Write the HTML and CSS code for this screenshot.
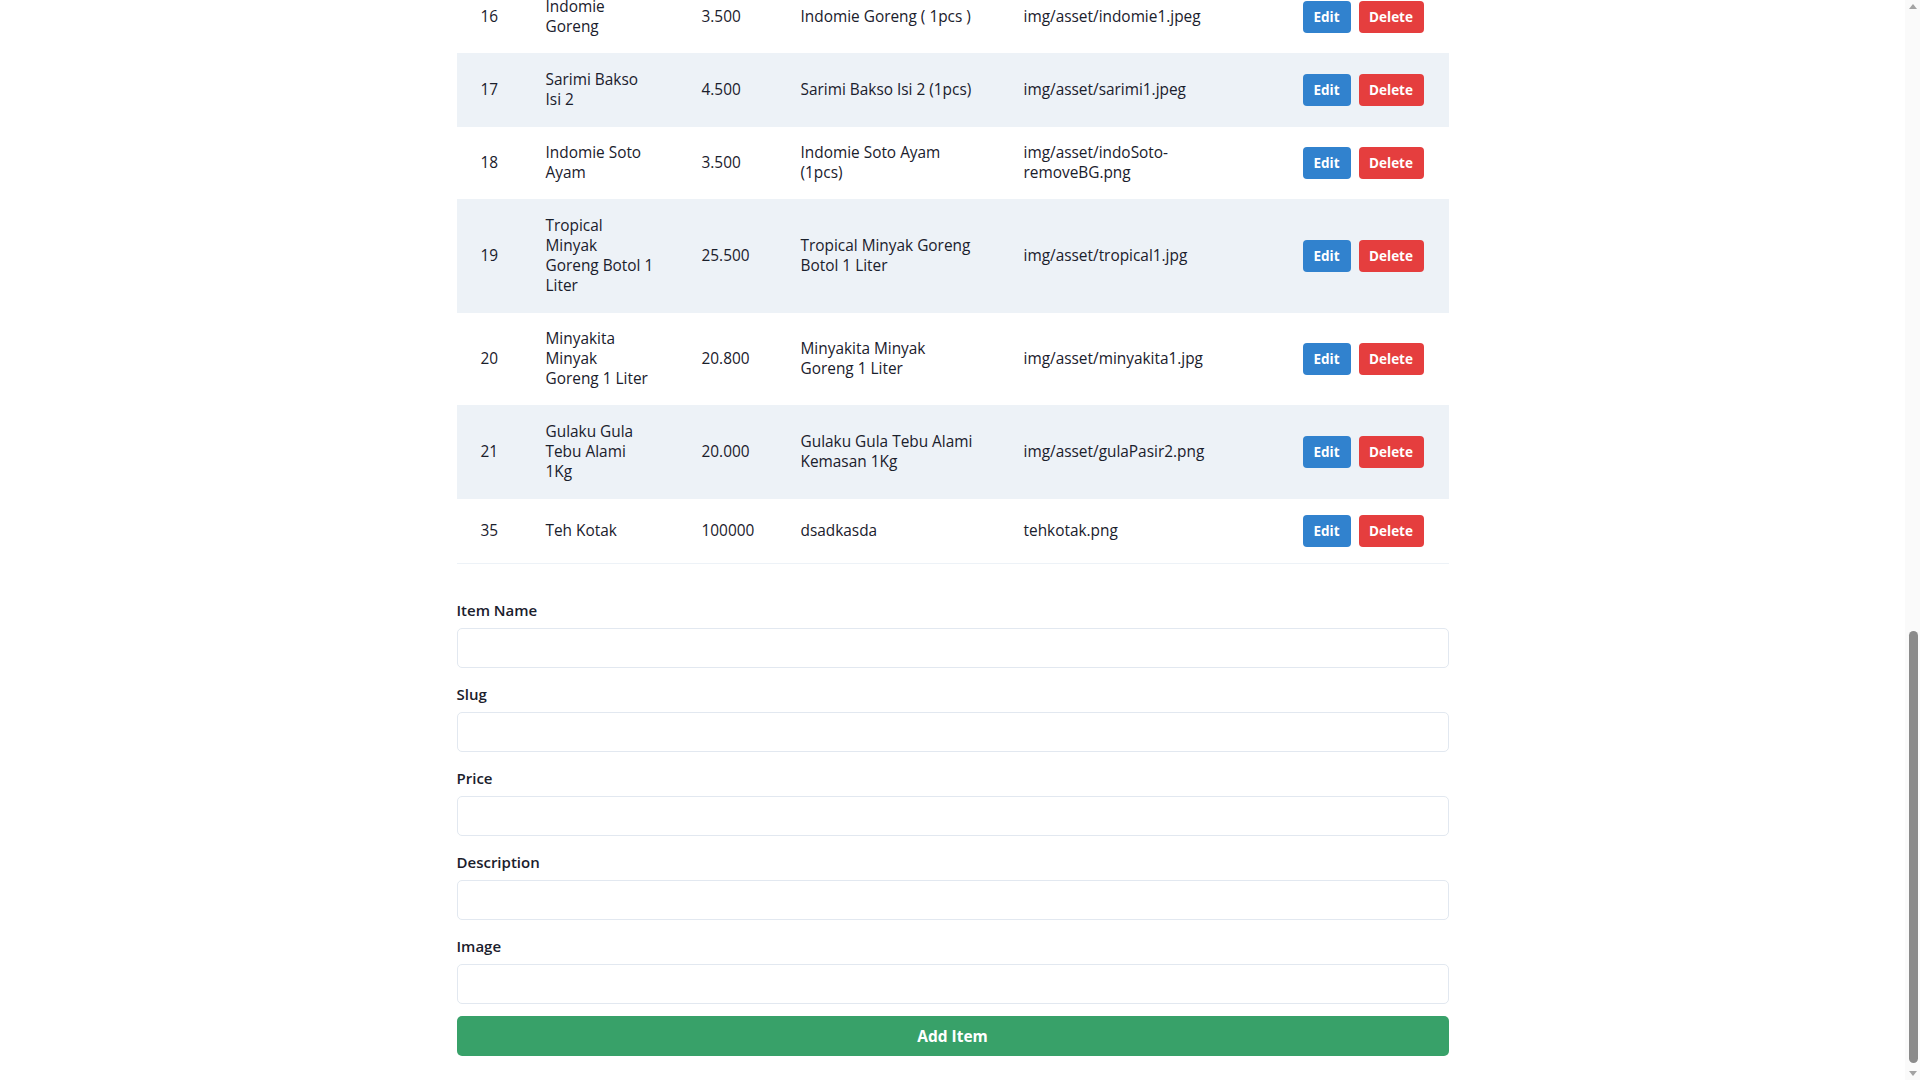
FILE: index.html
```html
<!DOCTYPE html>
<html lang="id">
<head>
<meta charset="utf-8">
<title>Items</title>
<link rel="stylesheet" href="styles.css">
</head>
<body>
<div class="screen">
  <main class="viewport">
    <div class="container">
      <table class="items">
        <colgroup>
          <col class="c-id"><col class="c-name"><col class="c-price"><col class="c-desc"><col class="c-img"><col class="c-act">
        </colgroup>
        <tbody>
          <tr>
            <td>16</td>
            <td>Indomie<br>Goreng</td>
            <td>3.500</td>
            <td>Indomie Goreng ( 1pcs )</td>
            <td>img/asset/indomie1.jpeg</td>
            <td><div class="actions"><button class="btn btn-edit">Edit</button><button class="btn btn-delete">Delete</button></div></td>
          </tr>
          <tr>
            <td>17</td>
            <td>Sarimi Bakso<br>Isi 2</td>
            <td>4.500</td>
            <td>Sarimi Bakso Isi 2 (1pcs)</td>
            <td>img/asset/sarimi1.jpeg</td>
            <td><div class="actions"><button class="btn btn-edit">Edit</button><button class="btn btn-delete">Delete</button></div></td>
          </tr>
          <tr>
            <td>18</td>
            <td>Indomie Soto<br>Ayam</td>
            <td>3.500</td>
            <td>Indomie Soto Ayam<br>(1pcs)</td>
            <td>img/asset/indoSoto-<br>removeBG.png</td>
            <td><div class="actions"><button class="btn btn-edit">Edit</button><button class="btn btn-delete">Delete</button></div></td>
          </tr>
          <tr>
            <td>19</td>
            <td>Tropical<br>Minyak<br>Goreng Botol 1<br>Liter</td>
            <td>25.500</td>
            <td>Tropical Minyak Goreng<br>Botol 1 Liter</td>
            <td>img/asset/tropical1.jpg</td>
            <td><div class="actions"><button class="btn btn-edit">Edit</button><button class="btn btn-delete">Delete</button></div></td>
          </tr>
          <tr>
            <td>20</td>
            <td>Minyakita<br>Minyak<br>Goreng 1 Liter</td>
            <td>20.800</td>
            <td>Minyakita Minyak<br>Goreng 1 Liter</td>
            <td>img/asset/minyakita1.jpg</td>
            <td><div class="actions"><button class="btn btn-edit">Edit</button><button class="btn btn-delete">Delete</button></div></td>
          </tr>
          <tr>
            <td>21</td>
            <td>Gulaku Gula<br>Tebu Alami<br>1Kg</td>
            <td>20.000</td>
            <td>Gulaku Gula Tebu Alami<br>Kemasan 1Kg</td>
            <td>img/asset/gulaPasir2.png</td>
            <td><div class="actions"><button class="btn btn-edit">Edit</button><button class="btn btn-delete">Delete</button></div></td>
          </tr>
          <tr>
            <td>35</td>
            <td>Teh Kotak</td>
            <td>100000</td>
            <td>dsadkasda</td>
            <td>tehkotak.png</td>
            <td><div class="actions"><button class="btn btn-edit">Edit</button><button class="btn btn-delete">Delete</button></div></td>
          </tr>
        </tbody>
      </table>

      <form class="item-form">
        <div class="field">
          <label for="name">Item Name</label>
          <input id="name" type="text">
        </div>
        <div class="field">
          <label for="slug">Slug</label>
          <input id="slug" type="text">
        </div>
        <div class="field">
          <label for="price">Price</label>
          <input id="price" type="text">
        </div>
        <div class="field">
          <label for="desc">Description</label>
          <input id="desc" type="text">
        </div>
        <div class="field">
          <label for="image">Image</label>
          <input id="image" type="text">
        </div>
        <button type="button" class="btn-add">Add Item</button>
      </form>
    </div>
  </main>
  <div class="scrollbar">
    <span class="arrow arrow-up"></span>
    <span class="track-space"></span>
    <span class="thumb"></span>
    <span class="arrow arrow-down"></span>
  </div>
</div>
</body>
</html>
```
FILE: styles.css
```css
html, body {
  margin: 0;
  height: 100%;
}

body {
  font-family: "Open Sans", "Noto Sans", "Liberation Sans", sans-serif;
  color: #1a202c;
  background: #ffffff;
}

.screen {
  display: flex;
  height: 100vh;
  overflow: hidden;
}

.viewport {
  flex: 1;
  min-width: 0;
  display: flex;
  flex-direction: column;
  justify-content: flex-end;
  overflow: hidden;
}

.container {
  width: 992px;
  margin: 0 auto;
  padding-bottom: 24px;
  flex-shrink: 0;
}

/* table */
.items {
  width: 100%;
  border-collapse: collapse;
  table-layout: fixed;
}

.c-id { width: 65px; }
.c-name { width: 156px; }
.c-price { width: 99px; }
.c-desc { width: 223px; }
.c-img { width: 279px; }
.c-act { width: 170px; }

.items td {
  padding: 16px 24px;
  font-size: 15.4px;
  line-height: 20px;
  vertical-align: middle;
  white-space: nowrap;
  border-bottom: 1px solid #edf2f7;
}

.items tr:nth-child(even) {
  background: #edf2f7;
}

.actions {
  display: flex;
  gap: 8px;
}

.btn {
  border: none;
  border-radius: 4px;
  padding: 6px 12px;
  font-family: inherit;
  font-size: 13.5px;
  font-weight: 700;
  line-height: 20px;
  color: #ffffff;
  cursor: pointer;
}

.btn-edit {
  background: #3182ce;
  width: 48px;
  padding: 6px 0;
}

.btn-delete {
  background: #e53e3e;
  width: 65px;
  padding: 6px 0;
}

/* form */
.item-form {
  margin-top: 36px;
}

.field + .field {
  margin-top: 16px;
}

.field label {
  display: block;
  font-size: 15px;
  font-weight: 600;
  line-height: 20px;
  margin-bottom: 8px;
  color: #1a202c;
}

.field input {
  display: block;
  box-sizing: border-box;
  width: 100%;
  height: 40px;
  border: 1px solid #e2e8f0;
  border-radius: 5px;
  padding: 8px 12px;
  font-family: inherit;
  font-size: 15px;
  background: #ffffff;
}

.btn-add {
  display: block;
  width: 100%;
  height: 40px;
  margin-top: 12px;
  border: none;
  border-radius: 5px;
  background: #38a169;
  color: #ffffff;
  font-family: inherit;
  font-size: 15.5px;
  font-weight: 700;
}

/* scrollbar */
.scrollbar {
  flex: none;
  width: 15px;
  background: #fafafa;
  display: flex;
  flex-direction: column;
  align-items: center;
}

.arrow {
  flex: none;
  height: 17px;
  width: 15px;
  display: flex;
  justify-content: center;
}

.arrow::before {
  content: "";
  width: 0;
  height: 0;
  border-left: 4.5px solid transparent;
  border-right: 4.5px solid transparent;
}

.arrow-up {
  align-items: flex-start;
  padding-top: 0;
}

.arrow-up::before {
  margin-top: 4px;
  border-bottom: 5px solid #a3a3a3;
}

.arrow-down {
  align-items: flex-end;
}

.arrow-down::before {
  margin-bottom: 4px;
  border-top: 5px solid #a3a3a3;
}

.track-space {
  flex: 1;
}

.thumb {
  flex: none;
  width: 9px;
  height: 432px;
  border-radius: 4.5px;
  background: #8b8b8b;
  margin-left: 1px;
}
```
